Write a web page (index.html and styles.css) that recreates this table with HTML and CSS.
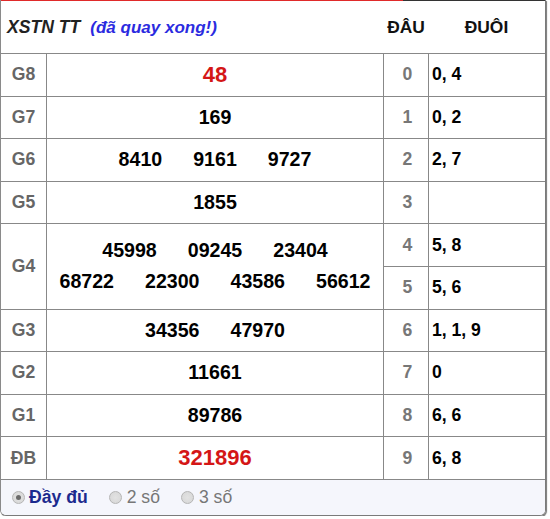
FILE: index.html
```html
<!DOCTYPE html>
<html lang="vi">
<head>
<meta charset="utf-8">
<title>XSTN TT</title>
<link rel="stylesheet" href="styles.css">
</head>
<body>
<div class="box">
  <div class="topbar"></div>
  <div class="head">
    <div class="title"><span class="t1">XSTN TT</span><span class="t2">(đã quay xong!)</span></div>
    <div class="hd">ĐÂU</div>
    <div class="hw">ĐUÔI</div>
  </div>
  <div class="grid">
    <div class="g">G8</div><div class="n"><span class="red">48</span></div><div class="h">0</div><div class="t">0, 4</div>
    <div class="g">G7</div><div class="n"><span>169</span></div><div class="h">1</div><div class="t">0, 2</div>
    <div class="g">G6</div><div class="n"><span>8410</span><span>9161</span><span>9727</span></div><div class="h">2</div><div class="t">2, 7</div>
    <div class="g">G5</div><div class="n"><span>1855</span></div><div class="h">3</div><div class="t"></div>
    <div class="g span2">G4</div>
    <div class="n span2 multi">
      <div class="line"><span>45998</span><span>09245</span><span>23404</span></div>
      <div class="line"><span>68722</span><span>22300</span><span>43586</span><span>56612</span></div>
    </div>
    <div class="h">4</div><div class="t">5, 8</div>
    <div class="h">5</div><div class="t">5, 6</div>
    <div class="g">G3</div><div class="n"><span>34356</span><span>47970</span></div><div class="h">6</div><div class="t">1, 1, 9</div>
    <div class="g">G2</div><div class="n"><span>11661</span></div><div class="h">7</div><div class="t">0</div>
    <div class="g">G1</div><div class="n"><span>89786</span></div><div class="h">8</div><div class="t">6, 6</div>
    <div class="g">ĐB</div><div class="n"><span class="red">321896</span></div><div class="h">9</div><div class="t">6, 8</div>
  </div>
  <div class="foot">
    <label class="opt on"><span class="radio checked"></span><span class="lbl">Đầy đủ</span></label>
    <label class="opt"><span class="radio"></span><span class="lbl">2 số</span></label>
    <label class="opt"><span class="radio"></span><span class="lbl">3 số</span></label>
  </div>
</div>
</body>
</html>
```

FILE: styles.css
```css
html, body {
  margin: 0;
  padding: 0;
  background: #fff;
}
body {
  font-family: "Liberation Sans", Arial, sans-serif;
  font-size: 17.6px;
  color: #000;
}
.box {
  width: 544px;
  border-left: 1px solid #8a8a8a;
  border-right: 1px solid #7a7a7a;
  border-bottom: 1px solid #7a7a7a;
  border-radius: 0 0 6px 6px;
  box-shadow: 1px 1px 1px #777;
  overflow: hidden;
}
.topbar {
  height: 1px;
  background: linear-gradient(to right, #e02a2a 402px, #333 402px);
}
.head {
  height: 52px;
  border-bottom: 1px solid #888;
  display: grid;
  grid-template-columns: 382px 45px 1fr;
  align-items: center;
  font-weight: bold;
}
.title {
  padding-left: 6px;
  font-style: italic;
  display: flex;
  align-items: baseline;
  gap: 10px;
}
.t1 {
  color: #222;
  font-size: 17.6px;
}
.t2 {
  color: #2b2be0;
  font-size: 17px;
}
.hd, .hw {
  text-align: center;
  font-size: 17.4px;
  color: #111;
}
.hd {
  padding-left: 1px;
}
.grid {
  display: grid;
  grid-template-columns: 45px 336px 44px 116px;
  grid-auto-rows: 41.6px;
  gap: 1px;
  background: #888;
  border-bottom: 1px solid #888;
}
.grid > div {
  background: #fff;
  display: flex;
  align-items: center;
}
.span2 {
  grid-row: span 2;
}
.g {
  justify-content: center;
  font-weight: bold;
  color: #666;
  font-size: 17.6px;
}
.n {
  justify-content: center;
  gap: 31px;
  font-weight: bold;
  font-size: 19.6px;
  color: #000;
}
.n.multi {
  flex-direction: column;
  gap: 8px;
  padding-bottom: 1px;
}
.line {
  display: flex;
  gap: 31px;
  justify-content: center;
}
.red {
  color: #d41616;
  font-size: 22px;
}
.h {
  justify-content: center;
  padding-left: 3px;
  font-weight: bold;
  color: #777;
  font-size: 17.6px;
}
.t {
  padding-left: 3px;
  font-weight: bold;
  color: #000;
  font-size: 17.6px;
}
.foot {
  height: 35px;
  background: #f5f6fc;
  display: flex;
  align-items: center;
  padding-left: 11px;
  gap: 21px;
}
.opt {
  display: flex;
  align-items: center;
  gap: 5px;
  color: #777;
  font-size: 17.6px;
}
.opt.on {
  color: #1c2a8e;
  font-weight: bold;
  gap: 4px;
}
.radio {
  width: 11px;
  height: 11px;
  border-radius: 50%;
  border: 1px solid #b5b5b5;
  background: radial-gradient(circle, #e2e2e2 0, #d6d6d6 100%);
  display: flex;
  align-items: center;
  justify-content: center;
}
.radio.checked::after {
  content: "";
  width: 5px;
  height: 5px;
  border-radius: 50%;
  background: #6a6a6a;
}
```
